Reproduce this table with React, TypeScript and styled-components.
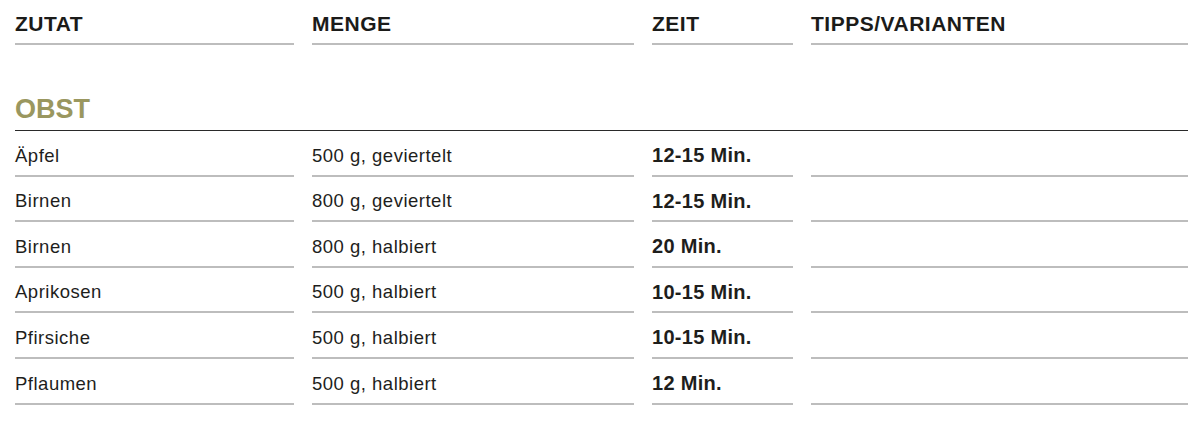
import React from "react";
import styled, { createGlobalStyle } from "styled-components";

const Global = createGlobalStyle`
  html, body { margin: 0; padding: 0; background: #ffffff; }
  body { font-family: "Liberation Sans", Arial, Helvetica, sans-serif; color: #1e1e1c; }
`;

const Table = styled.div`
  display: grid;
  grid-template-columns: 279px 322px 141px 1fr;
  column-gap: 18px;
  width: 1173px;
  margin-left: 15px;
`;

const HeadCell = styled.div`
  font-size: 21px;
  font-weight: 700;
  line-height: 24px;
  letter-spacing: 0.5px;
  color: #1b1b19;
  padding: 12px 0 7px;
  border-bottom: 2px solid #bdbdbd;
`;

const Section = styled.div`
  grid-column: 1 / -1;
  font-size: 27px;
  font-weight: 700;
  line-height: 30px;
  color: #9a975f;
  padding: 48.5px 0 6.5px;
  border-bottom: 1.5px solid #2a2a2a;
`;

const Cell = styled.div<{ $bold?: boolean }>`
  font-size: ${(p) => (p.$bold ? "20px" : "18.5px")};
  font-weight: ${(p) => (p.$bold ? 700 : 400)};
  letter-spacing: ${(p) => (p.$bold ? "0.3px" : "0.5px")};
  line-height: 20px;
  color: #1e1e1c;
  padding: ${(p) => (p.$bold ? "14px 0 9.6px" : "14.6px 0 9px")};
  border-bottom: 2px solid #bdbdbd;
  white-space: nowrap;
`;

const rows: [string, string, string, string][] = [
  ["Äpfel", "500 g, geviertelt", "12-15 Min.", ""],
  ["Birnen", "800 g, geviertelt", "12-15 Min.", ""],
  ["Birnen", "800 g, halbiert", "20 Min.", ""],
  ["Aprikosen", "500 g, halbiert", "10-15 Min.", ""],
  ["Pfirsiche", "500 g, halbiert", "10-15 Min.", ""],
  ["Pflaumen", "500 g, halbiert", "12 Min.", ""],
];

export default function App() {
  return (
    <>
      <Global />
      <Table>
        <HeadCell>ZUTAT</HeadCell>
        <HeadCell>MENGE</HeadCell>
        <HeadCell>ZEIT</HeadCell>
        <HeadCell>TIPPS/VARIANTEN</HeadCell>
        <Section>OBST</Section>
        {rows.map((r, i) => (
          <React.Fragment key={i}>
            <Cell>{r[0]}</Cell>
            <Cell>{r[1]}</Cell>
            <Cell $bold>{r[2]}</Cell>
            <Cell>{r[3] || "\u00a0"}</Cell>
          </React.Fragment>
        ))}
      </Table>
    </>
  );
}
